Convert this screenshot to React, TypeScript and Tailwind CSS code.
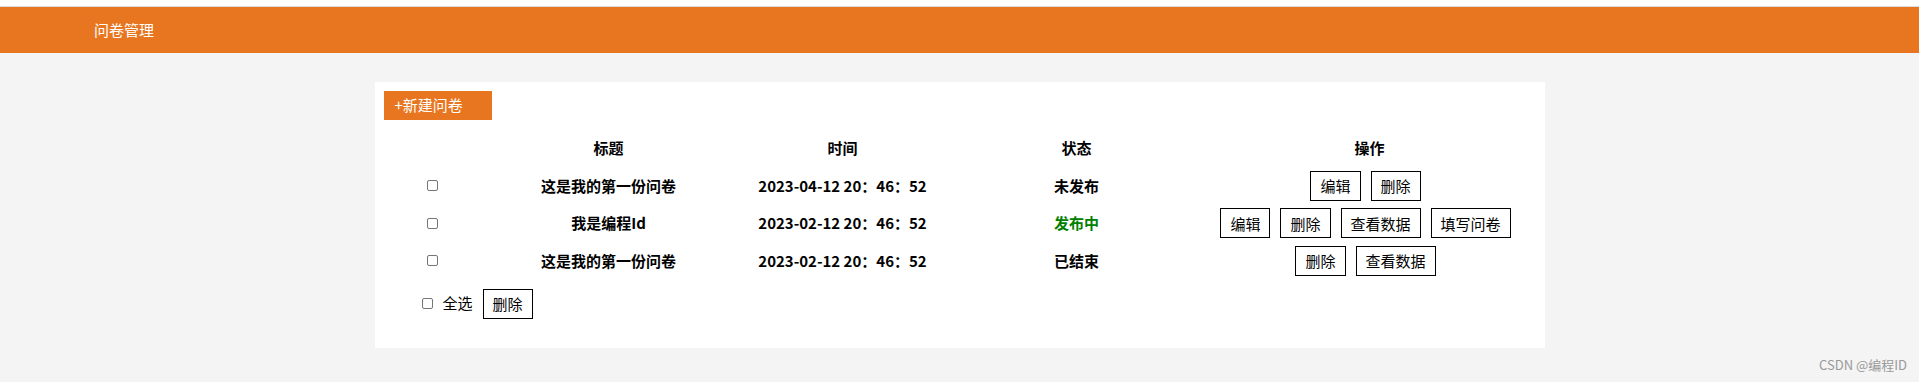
import React from "react";

type Row = {
    title: string;
    time: string;
    status: string;
    ops: string[];
};

const rows: Row[] = [
    { title: "这是我的第一份问卷", time: "2023-04-12 20：46：52", status: "未发布", ops: ["编辑", "删除"] },
    { title: "我是编程Id", time: "2023-02-12 20：46：52", status: "发布中", ops: ["编辑", "删除", "查看数据", "填写问卷"] },
    { title: "这是我的第一份问卷", time: "2023-02-12 20：46：52", status: "已结束", ops: ["删除", "查看数据"] },
];

const font = { fontFamily: '"Noto Sans CJK SC", "Noto Sans", sans-serif' };

function Box() {
    return <span className="block w-[11px] h-[11px] border border-[#767676] rounded-[2px] bg-white" />;
}

function Btn({ label }: { label: string }) {
    return (
        <button className="h-[30px] px-[9px] border border-black bg-white text-[15px] leading-none text-black">
            {label}
        </button>
    );
}

const cols = "grid grid-cols-[98px_254px_214px_254px_1fr] items-center";

export default function App() {
    return (
        <div className="min-h-[382px] bg-[#f4f4f4] text-black" style={font}>
            <div className="h-[7px] bg-white border-b border-[#dcdcdc]" />
            {/* top bar */}
            <div className="h-[46px] bg-[#e87620] flex items-center pl-[94px]">
                <span className="text-white text-[15px]">问卷管理</span>
            </div>

            <div className="flex justify-center pt-[29px]">
                <div className="w-[1170px] bg-white px-[9px] pt-[9px] pb-[29px]">
                    <button className="w-[108px] h-[29px] bg-[#e87620] text-white text-[15px] text-left pl-[11px]">
                        +新建问卷
                    </button>

                    <div className="mt-[9px]">
                        <div className={`${cols} h-[38px] font-bold text-[15px] text-center`}>
                            <span />
                            <span>标题</span>
                            <span>时间</span>
                            <span>状态</span>
                            <span>操作</span>
                        </div>
                        {rows.map((r, i) => (
                            <div key={i} className={`${cols} h-[37.5px] text-[15px] font-bold text-center`}>
                                <span className="flex justify-center">
                                    <Box />
                                </span>
                                <span>{r.title}</span>
                                <span>{r.time}</span>
                                <span className={r.status === "发布中" ? "text-[#008000]" : ""}>{r.status}</span>
                                <span className="flex justify-center gap-[10px] pr-[8px] font-normal">
                                    {r.ops.map((o) => (
                                        <Btn key={o} label={o} />
                                    ))}
                                </span>
                            </div>
                        ))}
                    </div>

                    {/* select all */}
                    <div className="flex items-center mt-[9px] pl-[38px] text-[15px]">
                        <Box />
                        <span className="ml-[10px] mr-[10px]">全选</span>
                        <Btn label="删除" />
                    </div>
                </div>
            </div>

            <div className="absolute right-[12px] top-[355px] text-[13px] text-[#999]" style={font}>
                CSDN @编程ID
            </div>
        </div>
    );
}
